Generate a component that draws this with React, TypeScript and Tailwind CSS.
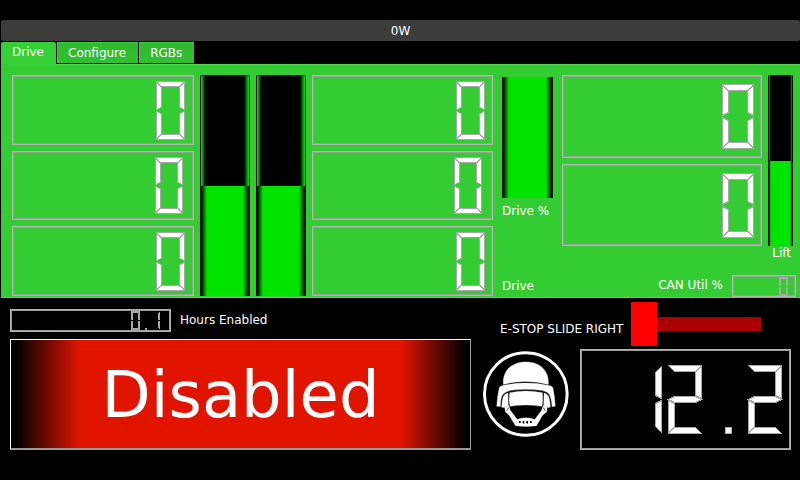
import { useState } from "react";
import clsx from "clsx";

/* Lit segments for each character of a seven-segment display; 7 is the point. */
const SEGMENTS: Record<string, number[]> = {
  "0": [0, 1, 2, 4, 5, 6],
  "1": [2, 5],
  "2": [0, 2, 3, 4, 6],
  "3": [0, 2, 3, 5, 6],
  "4": [1, 2, 3, 5],
  "5": [0, 1, 3, 5, 6],
  "6": [0, 1, 3, 4, 5, 6],
  "7": [0, 2, 5],
  "8": [0, 1, 2, 3, 4, 5, 6],
  "9": [0, 1, 2, 3, 5, 6],
  "-": [3],
  ".": [7],
};

type Point = [number, number];

function segmentPoints(segment: number, len: number): Point[] {
  const w = Math.floor(len / 5);
  const half = Math.floor(w / 2);
  const end = len - 1;
  switch (segment) {
    case 0:
      return [[0, 0], [end, 0], [end - w, w], [w, w]];
    case 1:
      return [[0, 1], [w, w + 1], [w, len - half - 1], [0, len - 1]];
    case 2:
      return [[end, 1], [end - w, w + 1], [end - w, len - half - 1], [end, len - 1]];
    case 3:
      return [[0, len], [w, len - half], [end - w, len - half], [end, len], [end - w, len + w - half], [w, len + w - half]];
    case 4:
      return [[0, len + 1], [w, len + half + 1], [w, 2 * len - w - 1], [0, 2 * len - 1]];
    case 5:
      return [[end, len + 1], [end - w, len + half + 1], [end - w, 2 * len - w - 1], [end, 2 * len - 1]];
    case 6:
      return [[0, 2 * len], [w, 2 * len - w], [end - w, 2 * len - w], [end, 2 * len]];
    default: {
      const x = Math.floor(len / 2);
      return [[x, 2 * len], [x + w, 2 * len], [x + w, 2 * len - w], [x, 2 * len - w]];
    }
  }
}

interface LcdProps {
  label: string;
  value: string;
  size: number;
  digits?: number;
  className?: string;
}

function Lcd({ label, value, size, digits = 5, className }: LcdProps) {
  const advance = Math.floor((size * 6) / 5);
  const gap = Math.floor(size / 5);
  const chars = value.padStart(digits).split("");
  return (
    <output
      aria-label={`${label}: ${value}`}
      className={clsx(
        "flex items-center justify-center overflow-hidden border border-[#b4b4b4] shadow-[inset_0_0_0_1px_#9c9c9c]",
        className,
      )}
    >
      <svg
        aria-hidden="true"
        width={digits * advance - gap + 1}
        height={size * 2 + 1}
        shapeRendering="crispEdges"
        className="shrink-0 overflow-visible fill-white stroke-[#a8a8a8]"
      >
        {chars.map((char, i) => (
          <g key={i} transform={`translate(${i * advance + 0.5} 0.5)`}>
            {(SEGMENTS[char] ?? []).map((s) => (
              <polygon key={s} points={segmentPoints(s, size).map((p) => p.join(",")).join(" ")} />
            ))}
          </g>
        ))}
      </svg>
    </output>
  );
}

function Gauge({ label, value, className }: { label: string; value: number; className?: string }) {
  return (
    <div
      role="progressbar"
      aria-label={label}
      aria-valuenow={value}
      aria-valuemin={0}
      aria-valuemax={100}
      className={clsx(
        "flex flex-col justify-end overflow-hidden rounded-t-xs border-t border-black bg-[linear-gradient(90deg,#000_1px,#00e400_1px,#00c000_2px,#000_5px,#000_calc(100%-6px),#00c000_calc(100%-2px),#00e400_calc(100%-1px),#000_calc(100%-1px))]",
        className,
      )}
    >
      <div
        className="bg-[linear-gradient(90deg,#000_1px,#00e400_7px,#00e400_calc(100%-7px),#000_calc(100%-1px))]"
        style={{ height: `${value}%` }}
      />
    </div>
  );
}

function HelmetLogo() {
  return (
    <svg viewBox="24 153 259 260" className="mt-0.5 size-[86px] shrink-0" role="img" aria-label="Team logo">
      <circle cx="153" cy="283" r="125" fill="#000" stroke="#fff" strokeWidth="9" />
      <g fill="#fff" stroke="#fff" strokeWidth="1">
        <path d="M85 254C82 215 108 186 153 186S224 215 221 254Q153 236 85 254Z" />
        <path d="M73 263Q76 258 84 257Q153 243 223 257Q232 258 235 265Q240 290 242 320L232 321Q231 295 223 283Q216 275 199 272Q153 265 107 272Q88 277 81 288Q76 300 76 321L65 320Q68 283 73 263Z" />
        <path d="M80 323Q81 298 86 289Q91 281 99 280L100 319L89 321V324Z" />
        <path d="M227 323Q226 298 221 289Q216 281 208 280L207 319L218 321V324Z" />
        <path d="M104 279Q153 269 203 279Q205 304 202 320Q153 312 105 320Q101 300 104 279Z" />
        <path d="M89 321L102 319L106 332L127 360Q137 355 153 355T180 360L201 332L205 319L218 321L216 337L203 348L185 379Q153 384 122 379L103 348L91 337Z" />
      </g>
      <path d="M135 365V371M146 365V372M157 365V372M168 365V371" stroke="#000" strokeWidth="5" />
      <path d="M95 334L101 324M212 334L206 324" stroke="#000" strokeWidth="2" />
    </svg>
  );
}

const TABS = ["Drive", "Configure", "RGBs"];

export default function App() {
  const [stop, setStop] = useState(0);

  return (
    <div className="min-h-screen bg-black pt-5 font-['DejaVu_Sans',sans-serif] text-xs text-white">
      <header className="ml-px flex h-[21px] items-center justify-center rounded-xs bg-[#3c3c3c]">0W</header>

      <div role="tablist" className="ml-px flex h-[23px] items-start gap-px pt-px">
        {TABS.map((tab, i) => (
          <button
            key={tab}
            type="button"
            role="tab"
            aria-selected={i === 0}
            className={clsx(
              i === 0
                ? "h-6 rounded-t-xs bg-[#35d035] pr-3 pb-1 pl-[11px]"
                : "h-[21px] border-t border-l border-[#38cf38] bg-linear-to-b from-[#2fb92f] to-[#2fc02f] pr-3 pl-2.5",
            )}
          >
            {tab}
          </button>
        ))}
      </div>

      <main className="ml-px grid grid-cols-[182fr_50px_50px_181fr_57px_234fr] items-start gap-x-1.5 border-y border-[#52d652] bg-[#33cc33] pt-2.5 pr-1 pl-[11px]">
        <div className="flex flex-col gap-1.5">
          <Lcd label="Left top" value="0" size={29} className="h-[70px]" />
          <Lcd label="Left middle" value="0" size={28} className="h-[69px]" />
          <Lcd label="Left bottom" value="0" size={29} className="h-[70px]" />
        </div>
        <Gauge label="Left output" value={50} className="h-[221px]" />
        <Gauge label="Right output" value={50} className="h-[221px]" />
        <div className="flex flex-col gap-1.5">
          <Lcd label="Right top" value="0" size={29} className="h-[70px]" />
          <Lcd label="Right middle" value="0" size={28} className="h-[69px]" />
          <Lcd label="Right bottom" value="0" size={29} className="h-[70px]" />
        </div>

        <div className="flex h-[222px] flex-col px-[3px] pt-0.5 leading-4 whitespace-nowrap">
          <div
            role="progressbar"
            aria-label="Drive %"
            aria-valuenow={100}
            className="mb-[5px] h-[121px] bg-[linear-gradient(90deg,#000_1px,#00e400_7px,#00e400_calc(100%-7px),#000_calc(100%-1px))]"
          />
          <span>Drive %</span>
          <span className="mt-auto mb-[3px]">Drive</span>
        </div>

        <div className="flex h-[222px] flex-col">
          <div className="flex gap-1.5 pr-[3px]">
            <div className="flex flex-1 flex-col gap-1.5">
              <Lcd label="Upper" value="0" size={32} className="h-[83px]" />
              <Lcd label="Lower" value="0" size={32} className="h-[82px]" />
            </div>
            <div
              role="progressbar"
              aria-label="Lift"
              aria-valuenow={50}
              className="flex w-[25px] flex-col justify-end overflow-hidden rounded-t-xs bg-[linear-gradient(90deg,#000_1px,#00a000_1px,#000_3px,#000_calc(100%-3px),#00a000_calc(100%-1px),#000_calc(100%-1px))]"
            >
              <div className="h-1/2 bg-[linear-gradient(90deg,#000_1px,#00a000_2px,#00e400_3px,#00e400_calc(100%-3px),#00a000_calc(100%-2px),#000_calc(100%-1px))]" />
            </div>
          </div>
          <span className="pr-[5px] text-right leading-[14px]">Lift</span>
          <div className="mt-auto flex items-center justify-end gap-[9px]">
            <span className="pb-0.5">CAN Util %</span>
            <Lcd label="CAN Util %" value="0" size={9} className="h-[22px] w-16" />
          </div>
        </div>
      </main>

      <footer className="flex gap-3 pr-[9px] pl-2.5">
        <div className="flex flex-1 flex-col gap-[7px] pt-[11px]">
          <div className="flex items-center gap-[9px]">
            <Lcd label="Hours Enabled" value="0.1" size={9} digits={14} className="h-[23px] w-[161px]" />
            <span className="pb-0.5">Hours Enabled</span>
          </div>
          <button
            type="button"
            className="h-[111px] border border-t-white border-r-[#999] border-b-2 border-l-white border-b-[#999] bg-[linear-gradient(90deg,#000_1%,#e11400_15%,#e11400_85%,#000_99%)] pt-0.5 text-[64px] leading-none"
          >
            Disabled
          </button>
        </div>

        <div className="flex w-[308px] shrink-0 flex-col gap-[3px] pt-1">
          <div className="flex h-11 items-center pl-[17px]">
            <label htmlFor="estop" className="w-[131px] pt-2.5 whitespace-nowrap">
              E-STOP SLIDE RIGHT
            </label>
            <input
              id="estop"
              type="range"
              min={0}
              max={100}
              value={stop}
              onChange={(e) => setStop(Number(e.target.value))}
              className="h-11 w-[130px] appearance-none bg-transparent [&::-webkit-slider-runnable-track]:h-3.5 [&::-webkit-slider-runnable-track]:bg-[#aa0000] [&::-webkit-slider-thumb]:-mt-[15px] [&::-webkit-slider-thumb]:h-11 [&::-webkit-slider-thumb]:w-[26px] [&::-webkit-slider-thumb]:appearance-none [&::-webkit-slider-thumb]:bg-[#ff0000]"
            />
          </div>
          <div className="flex items-start gap-[11px]">
            <HelmetLogo />
            <Lcd label="Battery voltage" value="12.2" size={34} digits={5} className="h-[101px] flex-1" />
          </div>
        </div>
      </footer>
    </div>
  );
}
